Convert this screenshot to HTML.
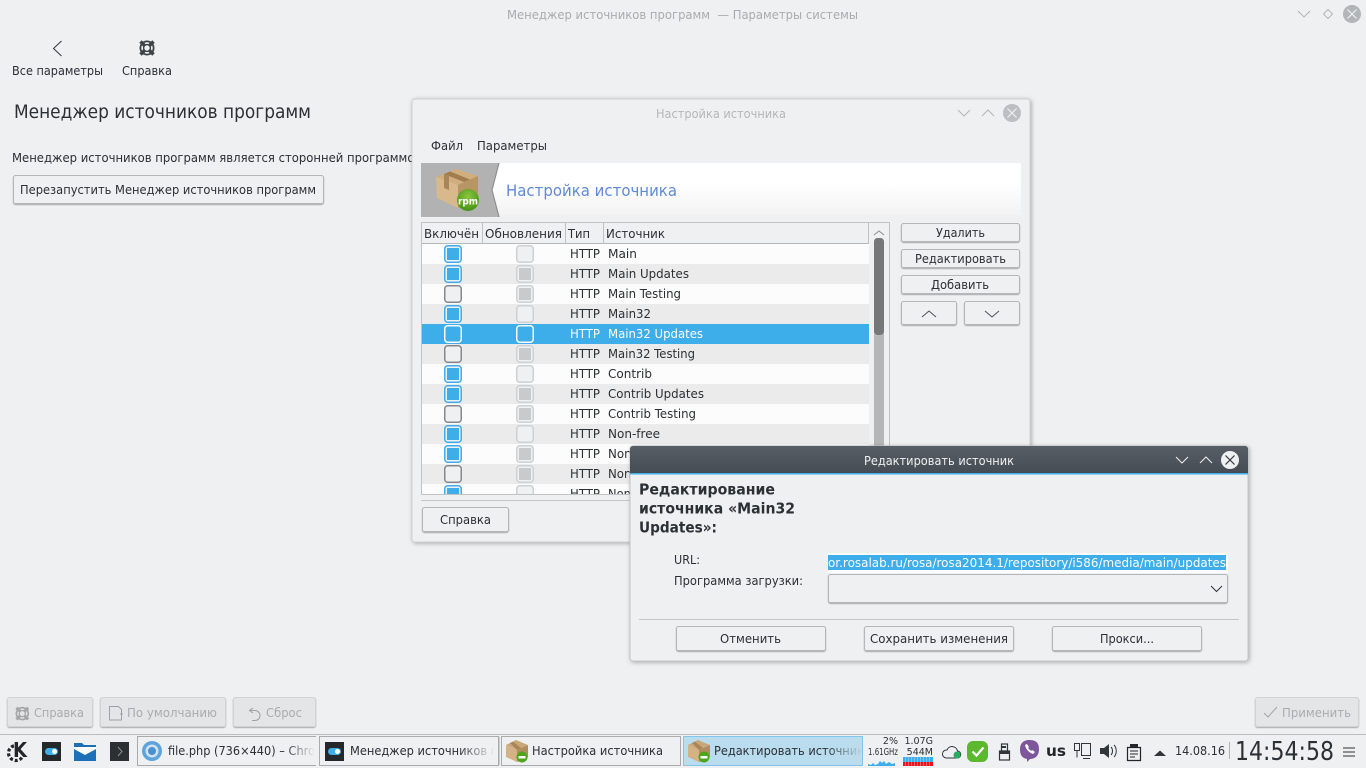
<!DOCTYPE html>
<html><head><meta charset="utf-8"><title>Менеджер источников программ</title>
<style>
html,body{margin:0;padding:0;width:1366px;height:768px;overflow:hidden;background:#eff0f1}
svg{display:block}
text{font-family:"DejaVu Sans","Liberation Sans",sans-serif;font-size:12.8px;fill:#2b3035}
.d{fill:#a9acae}
.btn{fill:#eff0f1;stroke:#b4b6b7;stroke-width:1}
.dis{fill:#e4e5e6;stroke:#d2d3d4;stroke-width:1}
.ch{fill:none;stroke:#31363b;stroke-width:1}
</style></head><body>
<svg width="1366" height="768" viewBox="0 0 1366 768" xmlns="http://www.w3.org/2000/svg">
<defs>
<filter id="sh" x="-5%" y="-5%" width="110%" height="110%"><feDropShadow dx="1" dy="1" stdDeviation="2" flood-color="#000" flood-opacity=".3"/></filter>
<filter id="bs" x="-5%" y="-10%" width="110%" height="125%"><feDropShadow dx="0" dy="1" stdDeviation=".5" flood-color="#000" flood-opacity=".3"/></filter>
<linearGradient id="tb" x1="0" y1="0" x2="0" y2="1"><stop offset="0" stop-color="#575e65"/><stop offset="1" stop-color="#464c53"/></linearGradient>
<linearGradient id="bn" x1="0" y1="0" x2="0" y2="1"><stop offset="0" stop-color="#fff"/><stop offset=".4" stop-color="#fff"/><stop offset="1" stop-color="#f3f3f4"/></linearGradient>
<linearGradient id="f1" x1="0" x2="1" y1="0" y2="0"><stop offset="0" stop-color="#eff0f1" stop-opacity="0"/><stop offset="1" stop-color="#eff0f1"/></linearGradient>
<linearGradient id="f2" x1="0" x2="1" y1="0" y2="0"><stop offset="0" stop-color="#b9dcee" stop-opacity="0"/><stop offset="1" stop-color="#b9dcee"/></linearGradient>
<radialGradient id="gr" cx=".5" cy=".35" r=".7"><stop offset="0" stop-color="#8cc63f"/><stop offset="1" stop-color="#3f8f12"/></radialGradient>
<g id="c1"><rect x=".75" y=".75" width="16.5" height="16.5" rx="3" fill="#eff0f1" stroke="#3daee9" stroke-width="1.5"/><rect x="3" y="3" width="12" height="12" fill="#3daee9"/></g>
<g id="c0"><rect x=".75" y=".75" width="16.5" height="16.5" rx="3" fill="#eff0f1" stroke="#85888a" stroke-width="1.5"/></g>
<g id="e0"><rect x=".75" y=".75" width="16.5" height="16.5" rx="3" fill="#eff0f1" stroke="#cfd0d1" stroke-width="1.5"/></g>
<g id="e1"><rect x=".75" y=".75" width="16.5" height="16.5" rx="3" fill="#eff0f1" stroke="#cfd0d1" stroke-width="1.5"/><rect x="3" y="3" width="12" height="12" fill="#c9cacb"/></g>
<g id="cs"><rect x=".75" y=".75" width="16.5" height="16.5" rx="3" fill="#3daee9" stroke="#fcfcfc" stroke-width="1.5"/></g>
<g id="box">
<polygon points="0,5 10,0 22,5 11,10" fill="#c9a878"/><polygon points="0,5 11,10 11,22 0,17" fill="#d4b283"/><polygon points="11,10 22,5 22,17 11,22" fill="#b08d5e"/><polygon points="4,3 7,1.600 15,8 11,10" fill="#a98557"/>
<circle cx="16" cy="17" r="5.500" fill="#4da51c"/><rect x="12.500" y="16" width="7" height="2.500" fill="#fff"/>
</g>
<g id="buoy" fill="none"><circle cx="8" cy="8" r="6.600" stroke-width="1.800"/><circle cx="8" cy="8" r="3.400" stroke-width="1.400"/><path d="M1.500 1.500l4 4M14.500 1.500l-4 4M1.500 14.500l4-4M14.500 14.500l-4-4" stroke-width="3.400"/></g>
<clipPath id="tc"><rect x="422" y="244" width="447" height="250"/></clipPath>
<clipPath id="p1"><rect x="828" y="553" width="398" height="20"/></clipPath>
</defs>

<rect width="1366" height="768" fill="#eff0f1"/>

<!-- Main window title -->
<text class="d" x="507" y="19" textLength="351" lengthAdjust="spacingAndGlyphs">Менеджер источников программ&#160; — Параметры системы</text>
<path d="M1298 11l6 6 6-6" fill="none" stroke="#b3b5b7"/>
<path d="M1328 9.5l4.5 4.5-4.5 4.5-4.5-4.5z" fill="none" stroke="#b3b5b7"/>
<circle cx="1352" cy="14" r="9" fill="#b3b6b8"/><path d="M1347.5 9.5l9 9M1356.5 9.5l-9 9" stroke="#eff0f1" stroke-width="1.2"/>

<!-- toolbar -->
<path d="M61.5 41l-8 7.5 8 7.5" fill="none" stroke="#31363b"/>
<use href="#buoy" x="139" y="40" stroke="#3d4246"/>
<text x="12" y="75" textLength="91" lengthAdjust="spacingAndGlyphs">Все параметры</text>
<text x="122" y="75" textLength="50" lengthAdjust="spacingAndGlyphs">Справка</text>

<text x="14" y="118" textLength="297" lengthAdjust="spacingAndGlyphs" style="font-size:18.500px">Менеджер источников программ</text>
<text x="12" y="162" textLength="410" lengthAdjust="spacingAndGlyphs">Менеджер источников программ является сторонней программой</text>
<rect class="btn" x="13.5" y="175.5" width="310" height="28" rx="2" filter="url(#bs)"/>
<text x="20" y="194" textLength="296" lengthAdjust="spacingAndGlyphs">Перезапустить Менеджер источников программ</text>

<!-- bottom buttons -->
<rect class="dis" x="7.5" y="697.5" width="85" height="29" rx="2" filter="url(#bs)"/>
<use href="#buoy" x="15" y="706" stroke="#a4a6a8" transform="translate(1.6 71) scale(.9)"/>
<text class="d" x="34" y="717" textLength="50" lengthAdjust="spacingAndGlyphs">Справка</text>
<rect class="dis" x="100.5" y="697.5" width="125" height="29" rx="2" filter="url(#bs)"/>
<path d="M109.5 706.5h9l3 3v10.500h-12zM120 714h3" fill="none" stroke="#9ea1a3"/>
<text class="d" x="127" y="717" textLength="90" lengthAdjust="spacingAndGlyphs">По умолчанию</text>
<rect class="dis" x="233.500" y="697.5" width="82" height="29" rx="2" filter="url(#bs)"/>
<path d="M253 708l-3.500 2.500 3.500 2.500M250 710.500h5a5 5 0 0 1 0 10h-3" fill="none" stroke="#9ea1a3"/>
<text class="d" x="266" y="717" textLength="36" lengthAdjust="spacingAndGlyphs">Сброс</text>
<rect class="dis" x="1255.500" y="697.5" width="103" height="29" rx="2" filter="url(#bs)"/>
<path d="M1264 713l4 4 9-10" fill="none" stroke="#a4a6a8"/>
<text class="d" x="1282" y="717" textLength="69" lengthAdjust="spacingAndGlyphs">Применить</text>

<!-- Dialog 1 -->
<rect x="412" y="99" width="618" height="443" rx="3" fill="#eff0f1" stroke="#d0d1d2" filter="url(#sh)"/>
<text x="656" y="118" textLength="130" lengthAdjust="spacingAndGlyphs" style="fill:#b4b6b8">Настройка источника</text>
<path d="M958 110l6 6 6-6M982 116l6-6 6 6" fill="none" stroke="#b3b5b7"/>
<circle cx="1012" cy="113" r="9" fill="#bcbfc1"/><path d="M1007.500 108.500l9 9M1016.500 108.500l-9 9" stroke="#eff0f1" stroke-width="1.200"/>
<text x="431" y="150" textLength="32" lengthAdjust="spacingAndGlyphs">Файл</text>
<text x="477" y="150" textLength="70" lengthAdjust="spacingAndGlyphs">Параметры</text>

<!-- banner -->
<rect x="421" y="163" width="600" height="52" fill="url(#bn)"/>
<polygon points="421,163 499,163 492,190 499,217 421,217" fill="#b2b2b2"/>
<path d="M499 163l-7 27 7 27" fill="none" stroke="#8f8f8f" stroke-width="1.200"/>
<polygon points="436,177 456,169 478,176 458,185" fill="#d0ae7d"/>
<polygon points="436,177 458,185 458,208 437,198" fill="#d8b98c"/>
<polygon points="458,185 478,176 478,198 458,208" fill="#b79565"/>
<polygon points="444,174 450,171.500 470,179.500 464,182" fill="#a07c4f"/>
<polygon points="444,174 449,176 449,190 444,188" fill="#a98557"/>
<circle cx="468" cy="200" r="11" fill="url(#gr)"/>
<text x="458" y="204.500" textLength="20" lengthAdjust="spacingAndGlyphs" style="font-size:10px;font-weight:bold;fill:#fff">rpm</text>
<text x="506" y="196" textLength="171" lengthAdjust="spacingAndGlyphs" style="font-size:16px;fill:#5f8ad6">Настройка источника</text>

<!-- table -->
<rect x="421.500" y="222.500" width="468" height="272" fill="#eff0f1" stroke="#c0c2c3"/>
<rect x="422" y="243" width="447" height="1" fill="#b5b7b8"/>
<path d="M482.500 223v20M565.500 223v20M603.500 223v20M868.500 223v21" stroke="#bfc1c2"/>
<text x="424" y="238" textLength="55" lengthAdjust="spacingAndGlyphs">Включён</text>
<text x="485" y="238" textLength="77" lengthAdjust="spacingAndGlyphs">Обновления</text>
<text x="568" y="238" textLength="22" lengthAdjust="spacingAndGlyphs">Тип</text>
<text x="606" y="238" textLength="59" lengthAdjust="spacingAndGlyphs">Источник</text>
<path d="M874 235l5-4 5 4" fill="none" stroke="#8c8e90"/>
<rect x="874" y="238" width="10" height="260" fill="#b5b6b7" rx="3"/>
<rect x="874" y="238" width="10" height="97" fill="#757779" rx="4"/>

<g clip-path="url(#tc)">
<rect x="422" y="244" width="447" height="260" fill="#fcfcfc"/>
<rect x="422" y="264" width="447" height="20" fill="#ebebeb"/>
<rect x="422" y="304" width="447" height="20" fill="#ebebeb"/>
<rect x="422" y="344" width="447" height="20" fill="#ebebeb"/>
<rect x="422" y="384" width="447" height="20" fill="#ebebeb"/>
<rect x="422" y="424" width="447" height="20" fill="#ebebeb"/>
<rect x="422" y="464" width="447" height="20" fill="#ebebeb"/>
<rect x="422" y="324" width="447" height="20" fill="#3daee9"/>

<use href="#c1" x="444" y="245"/><use href="#e0" x="516" y="245"/>
<use href="#c1" x="444" y="265"/><use href="#e1" x="516" y="265"/>
<use href="#c0" x="444" y="285"/><use href="#e1" x="516" y="285"/>
<use href="#c1" x="444" y="305"/><use href="#e0" x="516" y="305"/>
<use href="#cs" x="444" y="325"/><use href="#cs" x="516" y="325"/>
<use href="#c0" x="444" y="345"/><use href="#e1" x="516" y="345"/>
<use href="#c1" x="444" y="365"/><use href="#e0" x="516" y="365"/>
<use href="#c1" x="444" y="385"/><use href="#e1" x="516" y="385"/>
<use href="#c0" x="444" y="405"/><use href="#e1" x="516" y="405"/>
<use href="#c1" x="444" y="425"/><use href="#e0" x="516" y="425"/>
<use href="#c1" x="444" y="445"/><use href="#e1" x="516" y="445"/>
<use href="#c0" x="444" y="465"/><use href="#e1" x="516" y="465"/>
<use href="#c1" x="444" y="485"/><use href="#e0" x="516" y="485"/>

<text x="570" y="258" textLength="30" lengthAdjust="spacingAndGlyphs">HTTP</text><text x="608" y="258" textLength="29" lengthAdjust="spacingAndGlyphs">Main</text>
<text x="570" y="278" textLength="30" lengthAdjust="spacingAndGlyphs">HTTP</text><text x="608" y="278" textLength="81" lengthAdjust="spacingAndGlyphs">Main Updates</text>
<text x="570" y="298" textLength="30" lengthAdjust="spacingAndGlyphs">HTTP</text><text x="608" y="298" textLength="73" lengthAdjust="spacingAndGlyphs">Main Testing</text>
<text x="570" y="318" textLength="30" lengthAdjust="spacingAndGlyphs">HTTP</text><text x="608" y="318" textLength="43" lengthAdjust="spacingAndGlyphs">Main32</text>
<text x="570" y="338" textLength="30" lengthAdjust="spacingAndGlyphs" style="fill:#fcfcfc">HTTP</text><text x="608" y="338" textLength="95" lengthAdjust="spacingAndGlyphs" style="fill:#fcfcfc">Main32 Updates</text>
<text x="570" y="358" textLength="30" lengthAdjust="spacingAndGlyphs">HTTP</text><text x="608" y="358" textLength="87" lengthAdjust="spacingAndGlyphs">Main32 Testing</text>
<text x="570" y="378" textLength="30" lengthAdjust="spacingAndGlyphs">HTTP</text><text x="608" y="378" textLength="44" lengthAdjust="spacingAndGlyphs">Contrib</text>
<text x="570" y="398" textLength="30" lengthAdjust="spacingAndGlyphs">HTTP</text><text x="608" y="398" textLength="96" lengthAdjust="spacingAndGlyphs">Contrib Updates</text>
<text x="570" y="418" textLength="30" lengthAdjust="spacingAndGlyphs">HTTP</text><text x="608" y="418" textLength="88" lengthAdjust="spacingAndGlyphs">Contrib Testing</text>
<text x="570" y="438" textLength="30" lengthAdjust="spacingAndGlyphs">HTTP</text><text x="608" y="438" textLength="52" lengthAdjust="spacingAndGlyphs">Non-free</text>
<text x="570" y="458" textLength="30" lengthAdjust="spacingAndGlyphs">HTTP</text><text x="608" y="458" textLength="104" lengthAdjust="spacingAndGlyphs">Non-free Updates</text>
<text x="570" y="478" textLength="30" lengthAdjust="spacingAndGlyphs">HTTP</text><text x="608" y="478" textLength="96" lengthAdjust="spacingAndGlyphs">Non-free Testing</text>
<text x="570" y="498" textLength="30" lengthAdjust="spacingAndGlyphs">HTTP</text><text x="608" y="498" textLength="60" lengthAdjust="spacingAndGlyphs">Nonfree32</text>
</g>

<!-- right buttons -->
<rect class="btn" x="901.500" y="223.500" width="118" height="18" rx="2" filter="url(#bs)"/>
<text x="936" y="237" textLength="49" lengthAdjust="spacingAndGlyphs">Удалить</text>
<rect class="btn" x="901.500" y="249.500" width="118" height="18" rx="2" filter="url(#bs)"/>
<text x="915" y="263" textLength="91" lengthAdjust="spacingAndGlyphs">Редактировать</text>
<rect class="btn" x="901.500" y="275.500" width="118" height="18" rx="2" filter="url(#bs)"/>
<text x="931" y="289" textLength="58" lengthAdjust="spacingAndGlyphs">Добавить</text>
<rect class="btn" x="901.500" y="301.500" width="55" height="23" rx="2" filter="url(#bs)"/>
<path d="M922 317l7-6 7 6" fill="none" stroke="#4d5257"/>
<rect class="btn" x="964.500" y="301.500" width="55" height="23" rx="2" filter="url(#bs)"/>
<path d="M985 311l7 6 7-6" fill="none" stroke="#4d5257"/>

<rect x="421" y="500" width="600" height="1" fill="#c4c6c7"/>
<rect class="btn" x="422.500" y="507.500" width="86" height="24" rx="2" filter="url(#bs)"/>
<text x="440" y="524" textLength="51" lengthAdjust="spacingAndGlyphs">Справка</text>

<!-- Dialog 2 -->
<rect x="630" y="446" width="618" height="215" rx="3" fill="#eff0f1" stroke="#c4c6c7" filter="url(#sh)"/>
<path d="M630 473v-24a3 3 0 0 1 3-3h612a3 3 0 0 1 3 3v24z" fill="url(#tb)"/>
<rect x="630" y="473" width="618" height="1.500" fill="#3daee9"/>
<text x="864" y="465" textLength="150" lengthAdjust="spacingAndGlyphs" style="fill:#eff0f1">Редактировать источник</text>
<path d="M1176 457l6 6 6-6M1200 463l6-6 6 6" fill="none" stroke="#eff0f1"/>
<circle cx="1230" cy="460" r="9" fill="#eff0f1"/><path d="M1225.500 455.500l9 9M1234.500 455.500l-9 9" stroke="#31363b" stroke-width="1.200"/>

<text x="639" y="494.500" textLength="136" lengthAdjust="spacingAndGlyphs" style="font-size:15px;font-weight:bold">Редактирование</text>
<text x="639" y="513.500" textLength="156" lengthAdjust="spacingAndGlyphs" style="font-size:15px;font-weight:bold">источника «Main32</text>
<text x="639" y="532.500" textLength="78" lengthAdjust="spacingAndGlyphs" style="font-size:15px;font-weight:bold">Updates»:</text>
<text x="674" y="564" textLength="26" lengthAdjust="spacingAndGlyphs">URL:</text>
<text x="674" y="585" textLength="129" lengthAdjust="spacingAndGlyphs">Программа загрузки:</text>

<rect x="828" y="553" width="400" height="20" fill="#fcfcfc"/>
<rect x="828" y="555" width="398" height="15" fill="#3daee9"/>
<g clip-path="url(#p1)"><text x="828" y="567" textLength="398" lengthAdjust="spacingAndGlyphs" style="fill:#fcfcfc">or.rosalab.ru/rosa/rosa2014.1/repository/i586/media/main/updates</text></g>
<rect class="btn" x="828.500" y="574.500" width="399" height="28" rx="2" filter="url(#bs)"/>
<path d="M1211 586l5.500 5.500 5.500-5.500" fill="none" stroke="#31363b"/>

<rect x="639" y="619" width="600" height="1" fill="#c4c6c7"/>
<rect class="btn" x="676.500" y="626.500" width="149" height="24" rx="2" filter="url(#bs)"/>
<text x="720" y="643" textLength="61" lengthAdjust="spacingAndGlyphs">Отменить</text>
<rect class="btn" x="864.500" y="626.500" width="149" height="24" rx="2" filter="url(#bs)"/>
<text x="870" y="643" textLength="138" lengthAdjust="spacingAndGlyphs">Сохранить изменения</text>
<rect class="btn" x="1052.500" y="626.500" width="149" height="24" rx="2" filter="url(#bs)"/>
<text x="1100" y="643" textLength="54" lengthAdjust="spacingAndGlyphs">Прокси...</text>

<!-- Panel -->
<rect x="0" y="734" width="1366" height="1" fill="#bcbdbe"/>
<rect x="0" y="735" width="1366" height="33" fill="#eff0f1"/>
<!-- K logo -->
<circle cx="16" cy="753" r="7.500" fill="none" stroke="#232629" stroke-width="3.200" stroke-dasharray="3 2"/>
<rect x="14" y="741" width="14" height="15" fill="#eff0f1"/>
<text x="13" y="757" textLength="14" lengthAdjust="spacingAndGlyphs" style="font-size:20px;font-weight:bold;fill:#232629">K</text>
<!-- launcher icons -->
<rect x="42" y="742" width="19" height="19" fill="#24282b"/><rect x="45" y="748" width="13" height="7" rx="3.500" fill="#3daee9"/><circle cx="54.500" cy="751.500" r="2.500" fill="#fff"/>
<path d="M74 743h8l2 2h12v16H74z" fill="#1d6fb8"/><path d="M74 747h22v2l-11 6-11-6z" fill="#fff"/>
<rect x="110" y="742" width="19" height="19" fill="#2c3033"/><path d="M118 747l4 4.500-4 4.500" fill="none" stroke="#8b9092"/>
<!-- tasks -->
<rect x="137.500" y="736.500" width="178" height="29" fill="#eff0f1" stroke="#a9aaab"/>
<circle cx="152" cy="751" r="10" fill="#5da3dc"/><circle cx="152" cy="751" r="6.500" fill="#cfe3f3"/><circle cx="152" cy="751" r="4" fill="#4a90d0"/>
<text x="168" y="755" textLength="165" lengthAdjust="spacingAndGlyphs">file.php (736×440) – Chrome</text>
<rect x="285" y="737" width="30" height="28" fill="url(#f1)"/><rect x="315" y="737" width="4.500" height="28" fill="#eff0f1"/>
<rect x="319.500" y="736.500" width="179" height="29" fill="#eff0f1" stroke="#a9aaab"/>
<rect x="325" y="742" width="19" height="19" fill="#24282b"/><rect x="328" y="748" width="13" height="7" rx="3.500" fill="#3daee9"/><circle cx="337.500" cy="751.500" r="2.500" fill="#fff"/>
<text x="350" y="755" textLength="200" lengthAdjust="spacingAndGlyphs">Менеджер источников программ</text>
<rect x="458" y="737" width="37" height="28" fill="url(#f1)"/><rect x="495" y="737" width="3" height="28" fill="#eff0f1"/><rect x="499" y="737" width="60" height="28" fill="#eff0f1"/>
<rect x="498.500" y="737" width="1" height="28" fill="#a9aaab"/>
<rect x="501.500" y="736.500" width="179" height="29" fill="#eff0f1" stroke="#a9aaab"/>
<use href="#box" x="506" y="740"/>
<text x="532" y="755" textLength="131" lengthAdjust="spacingAndGlyphs">Настройка источника</text>
<rect x="683.500" y="736.500" width="179" height="29" fill="#b9dcee" stroke="#82c5ea"/>
<use href="#box" x="688" y="740"/>
<text x="714" y="755" textLength="150" lengthAdjust="spacingAndGlyphs">Редактировать источник</text>
<rect x="825" y="737" width="37" height="28" fill="url(#f2)"/><rect x="862" y="737" width="4" height="28" fill="#eff0f1"/><rect x="862" y="736" width="1" height="30" fill="#82c5ea"/>

<!-- monitors -->
<text x="898" y="744" text-anchor="end" style="font-size:9.500px">2%</text>
<text x="868" y="755" textLength="30" lengthAdjust="spacingAndGlyphs" style="font-size:9.500px">1.61GHz</text>
<path d="M868 766v-2l3 1 2-2 2 2 3-1 2-3 2 2 2-2 2 3 3-2 3 2 3-1v3z" fill="#3daee9"/>
<text x="933" y="744" text-anchor="end" style="font-size:9.500px">1.07G</text>
<text x="933" y="755" text-anchor="end" style="font-size:9.500px">544M</text>
<rect x="903" y="757" width="30" height="5" fill="#3daee9"/><rect x="903" y="762" width="30" height="4" fill="#e8141e"/>
<path d="M905.500 757v9M908.500 757v9M911.500 757v9M914.500 757v9M917.500 757v9M920.500 757v9M923.500 757v9M926.500 757v9M929.500 757v9" stroke="#eff0f1" stroke-opacity=".35"/>
<!-- tray -->
<path d="M947 757h11a3.500 3.500 0 0 0 .5-7 5.500 5.500 0 0 0-10.500-1 4 4 0 0 0-1 8z" fill="none" stroke="#31363b" transform="translate(-1 1)"/>
<circle cx="957" cy="755" r="3.500" fill="#27ae60"/>
<rect x="967" y="741" width="21" height="21" rx="6" fill="#5cb82e"/><path d="M972.500 751.500l4 4 7-8" fill="none" stroke="#fff" stroke-width="2.200"/>
<rect x="1001.500" y="744" width="6" height="7" fill="none" stroke="#31363b" stroke-width="1.200"/><rect x="999.500" y="751" width="10" height="9" fill="#eff0f1" stroke="#31363b" stroke-width="1.200"/><rect x="1002" y="746" width="4" height="2" fill="#31363b"/><rect x="1000" y="751" width="9" height="3" fill="#31363b"/>
<path d="M1029 740c6 0 10 2 10 9 0 7-4 10-9 10l-3 3v-3c-5-1-7-4-7-10s4-9 9-9z" fill="#7d569b"/><path d="M1025 745c1 4 3 7 8 9l2-2-3-2-1 1-3-3 1-1-2-3z" fill="#fff"/>
<text x="1046" y="756" textLength="20" lengthAdjust="spacingAndGlyphs" style="font-size:15px;font-weight:bold;fill:#232629">us</text>
<path d="M1074.500 743.500h5v7h-5zM1077 750.500v7M1081.500 743.500h9v12h-9zM1083 758.500h7" fill="none" stroke="#31363b"/>
<path d="M1100 748h4l5-4v14l-5-4h-4z" fill="#31363b"/><path d="M1111 747c2 2 2 6 0 8M1114 745c3 3 3 9 0 12" fill="none" stroke="#31363b"/>
<path d="M1127.500 747.500h13v13h-13z" fill="none" stroke="#232629" stroke-width="1.200"/><rect x="1130" y="744" width="8" height="4" fill="#232629"/><path d="M1130 751h8M1130 754h8M1130 757h5" stroke="#232629"/>
<path d="M1154 756l6-5.500 6 5.500z" fill="#31363b"/>
<text x="1175" y="755" textLength="50" lengthAdjust="spacingAndGlyphs" style="font-size:12px">14.08.16</text>
<rect x="1229" y="742" width="1" height="17" fill="#b0b2b3"/>
<text x="1235" y="760" textLength="99" lengthAdjust="spacingAndGlyphs" style="font-size:26px">14:54:58</text>
<path d="M1343 747h12v2h-12zM1343 751h12v2h-12zM1343 755h12v2h-12z" fill="#8e9092"/>
</svg>
</body></html>
